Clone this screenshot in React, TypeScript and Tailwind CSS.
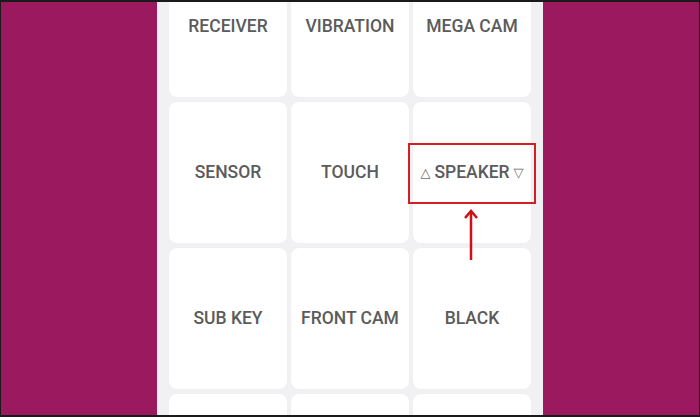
const rows = [
  ['RECEIVER', 'VIBRATION', 'MEGA CAM'],
  ['SENSOR', 'TOUCH', 'SPEAKER'],
  ['SUB KEY', 'FRONT CAM', 'BLACK'],
  ['', '', ''],
]

function Card({ label }: { label: string }) {
  const isSpeaker = label === 'SPEAKER'
  return (
    <div className={`relative flex items-center justify-center rounded-[9px] bg-white border border-[#f0f0f2] text-[17.5px] font-medium text-[#5b5b5b] ${isSpeaker ? 'z-10' : ''}`}>
      {isSpeaker ? (
        <span className="flex items-center gap-[4px]">
          <span className="text-[13px] font-normal text-[#6a6a6a] font-['DejaVu_Sans',sans-serif]">△</span>
          <span>SPEAKER</span>
          <span className="text-[13px] font-normal text-[#6a6a6a] font-['DejaVu_Sans',sans-serif]">▽</span>
        </span>
      ) : (
        label
      )}
      {isSpeaker && (
        <>
          {/* annotation box */}
          <div className="absolute left-[-5px] right-[-5px] top-[41px] h-[61px] border-2 border-[#d21f26]" />
          {/* annotation arrow */}
          <svg
            className="absolute left-[50px] top-[107px] z-10"
            width="16"
            height="52"
            viewBox="0 0 16 52"
          >
            <path d="M8 3 V51" stroke="#d10f14" strokeWidth="2.5" fill="none" />
            <path d="M2 9 L8 2 L14 9" stroke="#d10f14" strokeWidth="2.5" fill="none" strokeLinejoin="miter" />
          </svg>
        </>
      )}
    </div>
  )
}

export default function App() {
  return (
    <div className="w-[700px] h-[417px] overflow-hidden bg-[#9b1a5f] border-y-2 border-x border-[#1a1a1a] flex justify-center font-['Roboto',sans-serif]">
      <div className="w-[386px] h-full bg-[#f1f1f4] px-[11px] overflow-hidden">
        <div className="grid grid-cols-3 auto-rows-[143px] gap-x-[2px] gap-y-[3px] mt-[-47px]">
          {rows.flat().map((label, i) => (
            <Card key={i} label={label} />
          ))}
        </div>
      </div>
    </div>
  )
}
